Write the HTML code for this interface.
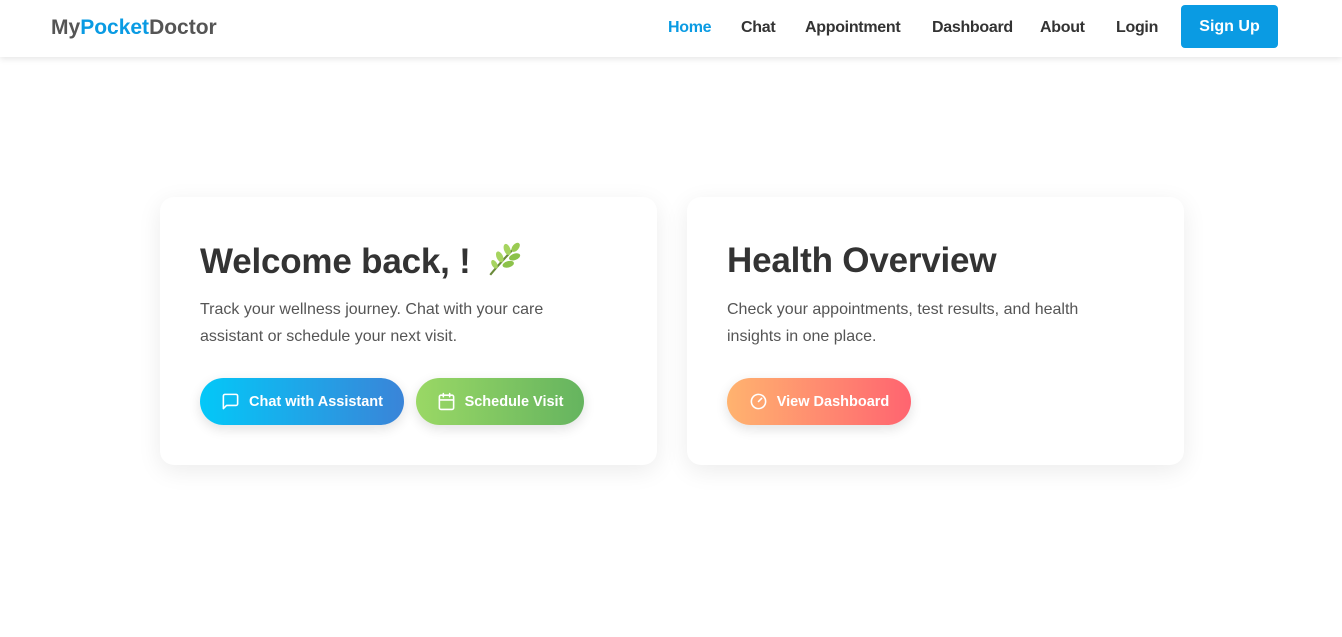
<!DOCTYPE html>
<html><head><meta charset="utf-8"><style>
*{box-sizing:border-box;margin:0;padding:0}
body{width:1342px;height:637px;background:#fff;font-family:"Liberation Sans","DejaVu Sans",sans-serif;overflow:hidden;position:relative}
nav{position:absolute;left:0;top:0;width:1342px;height:57px;background:#fff;box-shadow:0 2px 6px rgba(0,0,0,.1)}
.logo{position:absolute;left:51px;top:16px;font-size:21px;font-weight:bold;color:#555}
.logo span{color:#0a9be3}
.links a{position:absolute;top:19px;font-size:16px;color:#333;text-decoration:none;font-weight:bold;letter-spacing:-.3px}
.signup{position:absolute;left:1181px;top:5px;width:97px;height:43px;background:#0a9be3;border-radius:4px;color:#fff;font-weight:bold;font-size:16px;text-align:center;line-height:43px}
.card{position:absolute;top:197px;height:268px;width:497px;background:#fff;border-radius:14px;box-shadow:0 6px 24px rgba(0,0,0,.08);padding:0 40px}
h1{position:absolute;top:241px;font-size:35px;font-weight:bold;color:#333;letter-spacing:-.2px}
p{position:absolute;top:296px;font-size:16px;line-height:27px;color:#555}
.btn{position:absolute;top:378px;height:47px;border-radius:24px;color:#fff;font-weight:bold;font-size:14.5px;display:flex;align-items:center;justify-content:center;gap:9px;box-shadow:0 4px 12px rgba(0,0,0,.12)}
.btn svg{width:19px;height:19px;fill:none;stroke:#fff;stroke-width:2;stroke-linecap:round;stroke-linejoin:round}
</style></head><body>
<nav>
<div class="logo">My<span>Pocket</span>Doctor</div>
<div class="links">
<a style="left:668px;color:#0a9be3">Home</a>
<a style="left:741px">Chat</a>
<a style="left:805px">Appointment</a>
<a style="left:932px">Dashboard</a>
<a style="left:1040px">About</a>
<a style="left:1116px">Login</a>
</div>
<div class="signup">Sign Up</div>
</nav>
<div class="card" style="left:160px"></div>
<div class="card" style="left:687px"></div>
<h1 style="left:200px">Welcome back, ! <svg width="36" height="36" viewBox="0 0 34 34" style="vertical-align:-4px;margin-left:6px"><path d="M4 32 C12 22 20 14 30 3" stroke="#6a8a3a" stroke-width="2" fill="none"/><ellipse cx="28" cy="6" rx="3" ry="5" fill="#9acb52" transform="rotate(40 28 6)"/><ellipse cx="20" cy="8" rx="3" ry="5.5" fill="#a6d45f" transform="rotate(-20 20 8)"/><ellipse cx="27" cy="15" rx="3" ry="5.5" fill="#8cc24a" transform="rotate(70 27 15)"/><ellipse cx="13" cy="15" rx="3" ry="5.5" fill="#a6d45f" transform="rotate(-25 13 15)"/><ellipse cx="21" cy="22" rx="3" ry="5.5" fill="#8cc24a" transform="rotate(75 21 22)"/><ellipse cx="8" cy="22" rx="2.5" ry="4.5" fill="#a6d45f" transform="rotate(-30 8 22)"/></svg></h1>
<p style="left:200px;width:380px">Track your wellness journey. Chat with your care<br>assistant or schedule your next visit.</p>
<div class="btn" style="left:200px;width:204px;background:linear-gradient(90deg,#03c8f8,#3a84d8)"><svg viewBox="0 0 24 24"><path d="M21 15a2 2 0 0 1-2 2H7l-4 4V5a2 2 0 0 1 2-2h14a2 2 0 0 1 2 2z"/></svg>Chat with Assistant</div>
<div class="btn" style="left:416px;width:168px;background:linear-gradient(90deg,#9ad865,#65b45f)"><svg viewBox="0 0 24 24"><rect x="3" y="4" width="18" height="18" rx="2"/><path d="M16 2v4M8 2v4M3 10h18"/></svg>Schedule Visit</div>
<h1 style="left:727px">Health Overview</h1>
<p style="left:727px;width:400px">Check your appointments, test results, and health<br>insights in one place.</p>
<div class="btn" style="left:727px;width:184px;background:linear-gradient(90deg,#ffb36f,#ff6470)"><svg viewBox="0 0 24 24"><circle cx="12" cy="12" r="9"/><path d="M12 12l4-4"/></svg>View Dashboard</div>
</body></html>
